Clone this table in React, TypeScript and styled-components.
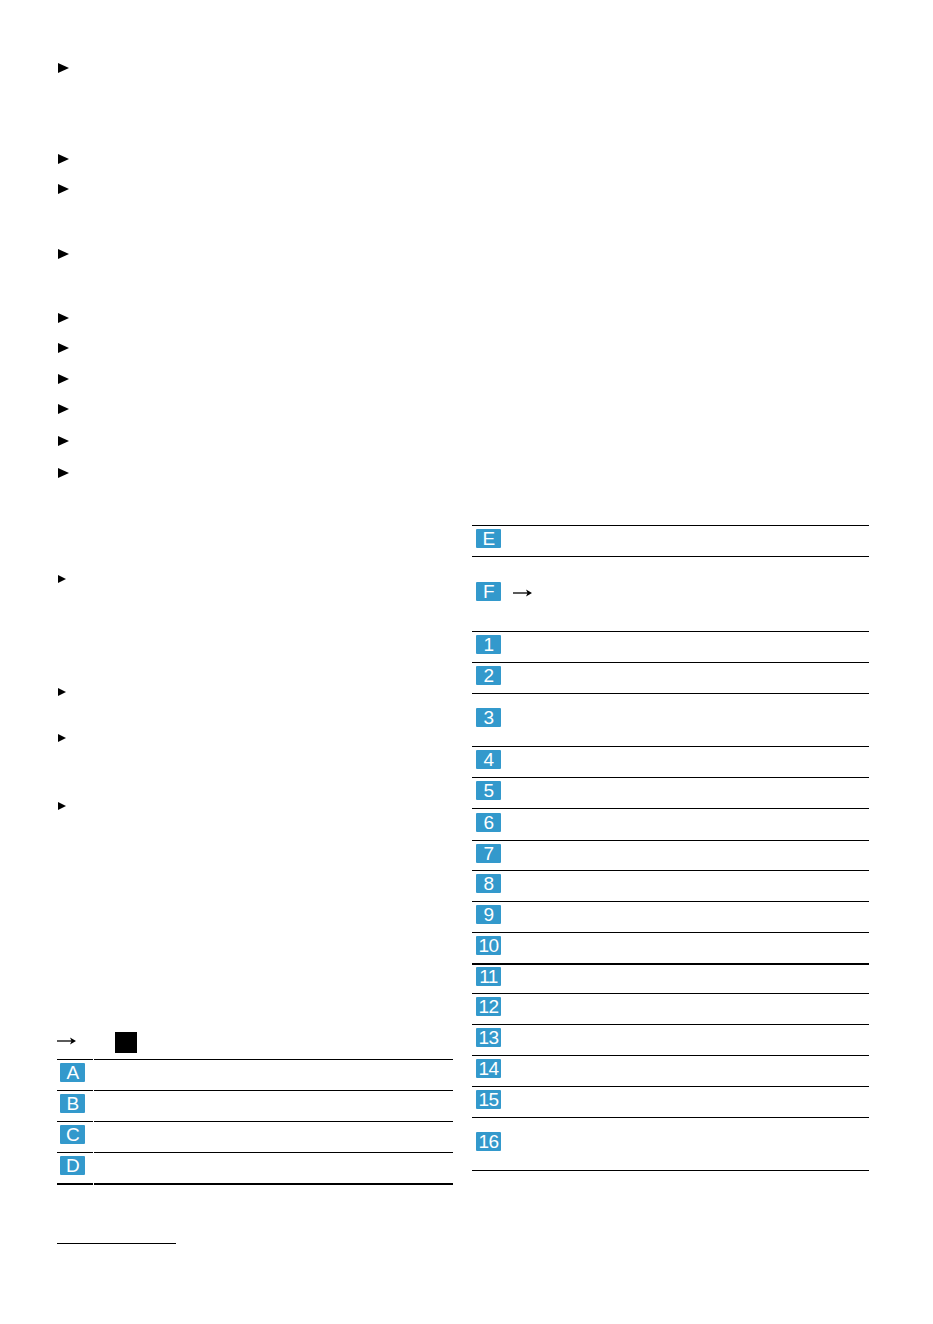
import React from "react";
import styled, { createGlobalStyle } from "styled-components";

const Global = createGlobalStyle`
  html, body { margin: 0; padding: 0; background: #fff; }
  body { font-family: "Liberation Sans", Arial, sans-serif; color: #000; }
`;

const Page = styled.div`
  width: 933px;
  min-height: 1324px;
  box-sizing: border-box;
  padding-left: 57px;
  display: grid;
  grid-template-columns: 396px 397px;
  column-gap: 19px;
  align-items: start;
`;

const LeftColumn = styled.div`
  padding-top: 63px;
  display: flex;
  flex-direction: column;
`;

const RightColumn = styled.div`
  padding-top: 525px;
`;

const ListItem = styled.div<{ $h: number }>`
  height: ${(p) => p.$h}px;
  padding-left: 1px;
  display: flex;
  align-items: flex-start;
`;

const Bullet = styled.span<{ $small?: boolean }>`
  width: 0;
  height: 0;
  border-left: ${(p) => (p.$small ? 8.5 : 11)}px solid #000;
  border-top: ${(p) => (p.$small ? 4.25 : 5.75)}px solid transparent;
  border-bottom: ${(p) => (p.$small ? 4.25 : 5.75)}px solid transparent;
`;

const HeaderRow = styled.div`
  height: 27px;
  display: flex;
  align-items: flex-start;
`;

const ArrowIcon = styled.svg<{ $top?: number }>`
  display: block;
  flex: none;
  margin-top: ${(p) => p.$top ?? 0}px;
`;

const BlackSquare = styled.span`
  width: 22px;
  height: 21px;
  background: #000;
  margin-left: 39px;
`;

const LegendGrid = styled.div`
  display: grid;
  grid-template-columns: 36px 1fr;
  column-gap: 1px;
`;

const GridCell = styled.div<{ $last?: boolean }>`
  border-top: 1px solid #000;
  border-bottom: ${(p) => (p.$last ? "2px solid #000" : "none")};
  display: flex;
  align-items: center;
  padding: 0 0 5px 3px;
  box-sizing: border-box;
  height: ${(p) => (p.$last ? 33 : 31)}px;
`;

const Badge = styled.span`
  display: inline-flex;
  align-items: center;
  justify-content: center;
  width: 25px;
  height: 19px;
  border-radius: 1px;
  background: #3399cc;
  color: #fff;
  font-family: "Liberation Sans", Arial, sans-serif;
  font-size: 19px;
  line-height: 19px;
  letter-spacing: -0.6px;
  flex: none;
  white-space: nowrap;
`;

const Rule = styled.div`
  margin-top: 58px;
  width: 119px;
  height: 1px;
  background: #000;
`;

const Table = styled.div`
  border-bottom: 1px solid #000;
`;

const Row = styled.div<{ $h: number; $thick?: boolean }>`
  border-top: ${(p) => (p.$thick ? 2 : 1)}px solid #000;
  height: ${(p) => p.$h}px;
  display: flex;
  align-items: center;
  padding: 0 0 5px 4px;
  box-sizing: border-box;
  gap: 12px;
`;

const Arrow = ({ top }: { top?: number }) => (
  <ArrowIcon $top={top} width="19" height="8" viewBox="0 0 19 8">
    <line x1="0" y1="4" x2="16" y2="4" stroke="#000" strokeWidth="1.3" />
    <path d="M13 0.5 L19 4 L13 7.5 L14.6 4 Z" fill="#000" />
  </ArrowIcon>
);

const bigItems = [91, 30, 65, 64, 30, 31, 30, 32, 32, 107];
const smallItems = [113, 46, 68, 230];

const leftRows = ["A", "B", "C", "D"];

const rightRows: { label: string; h: number; thick?: boolean; arrow?: boolean }[] = [
  { label: "E", h: 31 },
  { label: "F", h: 75, arrow: true },
  { label: "1", h: 31 },
  { label: "2", h: 31 },
  { label: "3", h: 53 },
  { label: "4", h: 31 },
  { label: "5", h: 31 },
  { label: "6", h: 32 },
  { label: "7", h: 30 },
  { label: "8", h: 31 },
  { label: "9", h: 31 },
  { label: "10", h: 31 },
  { label: "11", h: 30, thick: true },
  { label: "12", h: 31 },
  { label: "13", h: 31 },
  { label: "14", h: 31 },
  { label: "15", h: 31 },
  { label: "16", h: 53 },
];

export default function App() {
  return (
    <>
      <Global />
      <Page>
        <LeftColumn>
          {bigItems.map((h, i) => (
            <ListItem key={`b${i}`} $h={h}>
              <Bullet />
            </ListItem>
          ))}
          {smallItems.map((h, i) => (
            <ListItem key={`s${i}`} $h={h}>
              <Bullet $small />
            </ListItem>
          ))}
          <HeaderRow>
            <Arrow top={5} />
            <BlackSquare />
          </HeaderRow>
          <LegendGrid>
            {leftRows.map((l, i) => (
              <React.Fragment key={l}>
                <GridCell $last={i === leftRows.length - 1}>
                  <Badge>{l}</Badge>
                </GridCell>
                <GridCell $last={i === leftRows.length - 1} />
              </React.Fragment>
            ))}
          </LegendGrid>
          <Rule />
        </LeftColumn>
        <RightColumn>
          <Table>
            {rightRows.map((r) => (
              <Row key={r.label} $h={r.h} $thick={r.thick}>
                <Badge>{r.label}</Badge>
                {r.arrow && <Arrow top={2} />}
              </Row>
            ))}
          </Table>
        </RightColumn>
      </Page>
    </>
  );
}
